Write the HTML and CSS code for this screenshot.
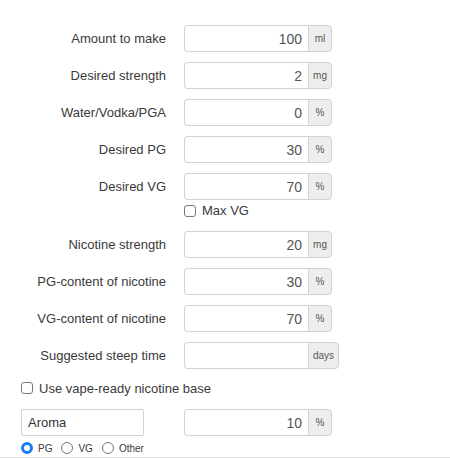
FILE: index.html
```html
<!DOCTYPE html>
<html lang="en">
<head>
  <meta charset="UTF-8" />
  <meta name="viewport" content="width=device-width, initial-scale=1.0" />
  <title>E-liquid calculator</title>
  <link rel="stylesheet" href="styles.css">
</head>
<body>
  <form class="calc">
    <div class="row">
      <label class="lbl">Amount to make</label>
      <div class="group"><input class="num" value="100"><span class="addon">ml</span></div>
    </div>
    <div class="row">
      <label class="lbl">Desired strength</label>
      <div class="group"><input class="num" value="2"><span class="addon">mg</span></div>
    </div>
    <div class="row">
      <label class="lbl">Water/Vodka/PGA</label>
      <div class="group"><input class="num" value="0"><span class="addon">%</span></div>
    </div>
    <div class="row">
      <label class="lbl">Desired PG</label>
      <div class="group"><input class="num" value="30"><span class="addon">%</span></div>
    </div>
    <div class="row">
      <label class="lbl">Desired VG</label>
      <div class="group"><input class="num" value="70"><span class="addon">%</span></div>
    </div>
    <label class="check maxvg"><input type="checkbox"> Max VG</label>

    <div class="row">
      <label class="lbl">Nicotine strength</label>
      <div class="group"><input class="num" value="20"><span class="addon">mg</span></div>
    </div>
    <div class="row">
      <label class="lbl">PG-content of nicotine</label>
      <div class="group"><input class="num" value="30"><span class="addon">%</span></div>
    </div>
    <div class="row">
      <label class="lbl">VG-content of nicotine</label>
      <div class="group"><input class="num" value="70"><span class="addon">%</span></div>
    </div>
    <div class="row">
      <label class="lbl">Suggested steep time</label>
      <div class="group"><input class="num" value=""><span class="addon">days</span></div>
    </div>

    <label class="check vape"><input type="checkbox"> Use vape-ready nicotine base</label>

    <div class="aroma-row">
      <input class="aroma-name" value="Aroma">
      <div class="group"><input class="num" value="10"><span class="addon">%</span></div>
    </div>
    <div class="base">
      <label><input type="radio" name="base" checked> PG</label>
      <label><input type="radio" name="base"> VG</label>
      <label><input type="radio" name="base"> Other</label>
    </div>
  </form>
  <div class="divider"></div>
</body>
</html>
```

FILE: styles.css
```css
body {
  margin: 0;
  font-family: "Liberation Sans", Arial, sans-serif;
  font-size: 13px;
  color: #3a3a3a;
  background: #fff;
}
.calc {
  padding-top: 25px;
}
.row {
  display: grid;
  grid-template-columns: 166px auto;
  column-gap: 18px;
  align-items: center;
  height: 27px;
  margin-bottom: 10px;
}
.lbl {
  text-align: right;
  white-space: nowrap;
}
.group {
  display: flex;
  height: 27px;
}
.num {
  box-sizing: border-box;
  width: 124px;
  height: 27px;
  border: 1px solid #d2d2d2;
  border-right: none;
  border-radius: 4px 0 0 4px;
  padding: 0 6px;
  text-align: right;
  font-family: inherit;
  font-size: 14px;
  color: #555;
  outline: none;
}
.addon {
  box-sizing: border-box;
  min-width: 24px;
  padding: 0 4px;
  display: flex;
  align-items: center;
  justify-content: center;
  background: #eee;
  border: 1px solid #d2d2d2;
  border-radius: 0 4px 4px 0;
  font-size: 10px;
  color: #555;
}
.check {
  display: flex;
  align-items: center;
  gap: 6px;
  height: 15px;
}
.check input {
  appearance: none;
  -webkit-appearance: none;
  margin: 0;
  width: 12px;
  height: 12px;
  border: 1px solid #777;
  border-radius: 3px;
  background: #fff;
}
.maxvg {
  margin: -7px 0 13px 184px;
}
.vape {
  margin: 11px 0 13px 21px;
  height: 16px;
}
.aroma-row {
  display: flex;
  align-items: center;
  height: 27px;
  padding-left: 21px;
  gap: 40px;
}
.aroma-name {
  box-sizing: border-box;
  width: 123px;
  height: 27px;
  border: 1px solid #d2d2d2;
  border-radius: 2px;
  padding: 0 6px;
  font-family: inherit;
  font-size: 13px;
  color: #333;
  outline: none;
}
.base {
  display: flex;
  gap: 9px;
  padding-left: 21px;
  margin-top: 6px;
  height: 12px;
  font-size: 10px;
  align-items: center;
}
.base label {
  display: flex;
  align-items: center;
  gap: 5px;
}
.base input {
  appearance: none;
  -webkit-appearance: none;
  margin: 0;
  box-sizing: border-box;
  width: 12px;
  height: 12px;
  border: 1px solid #777;
  border-radius: 50%;
  background: #fff;
}
.base input:checked {
  border: 3.5px solid #1a7cf3;
}
.divider {
  margin-top: 3px;
  border-top: 1px solid #ddd;
}
```
